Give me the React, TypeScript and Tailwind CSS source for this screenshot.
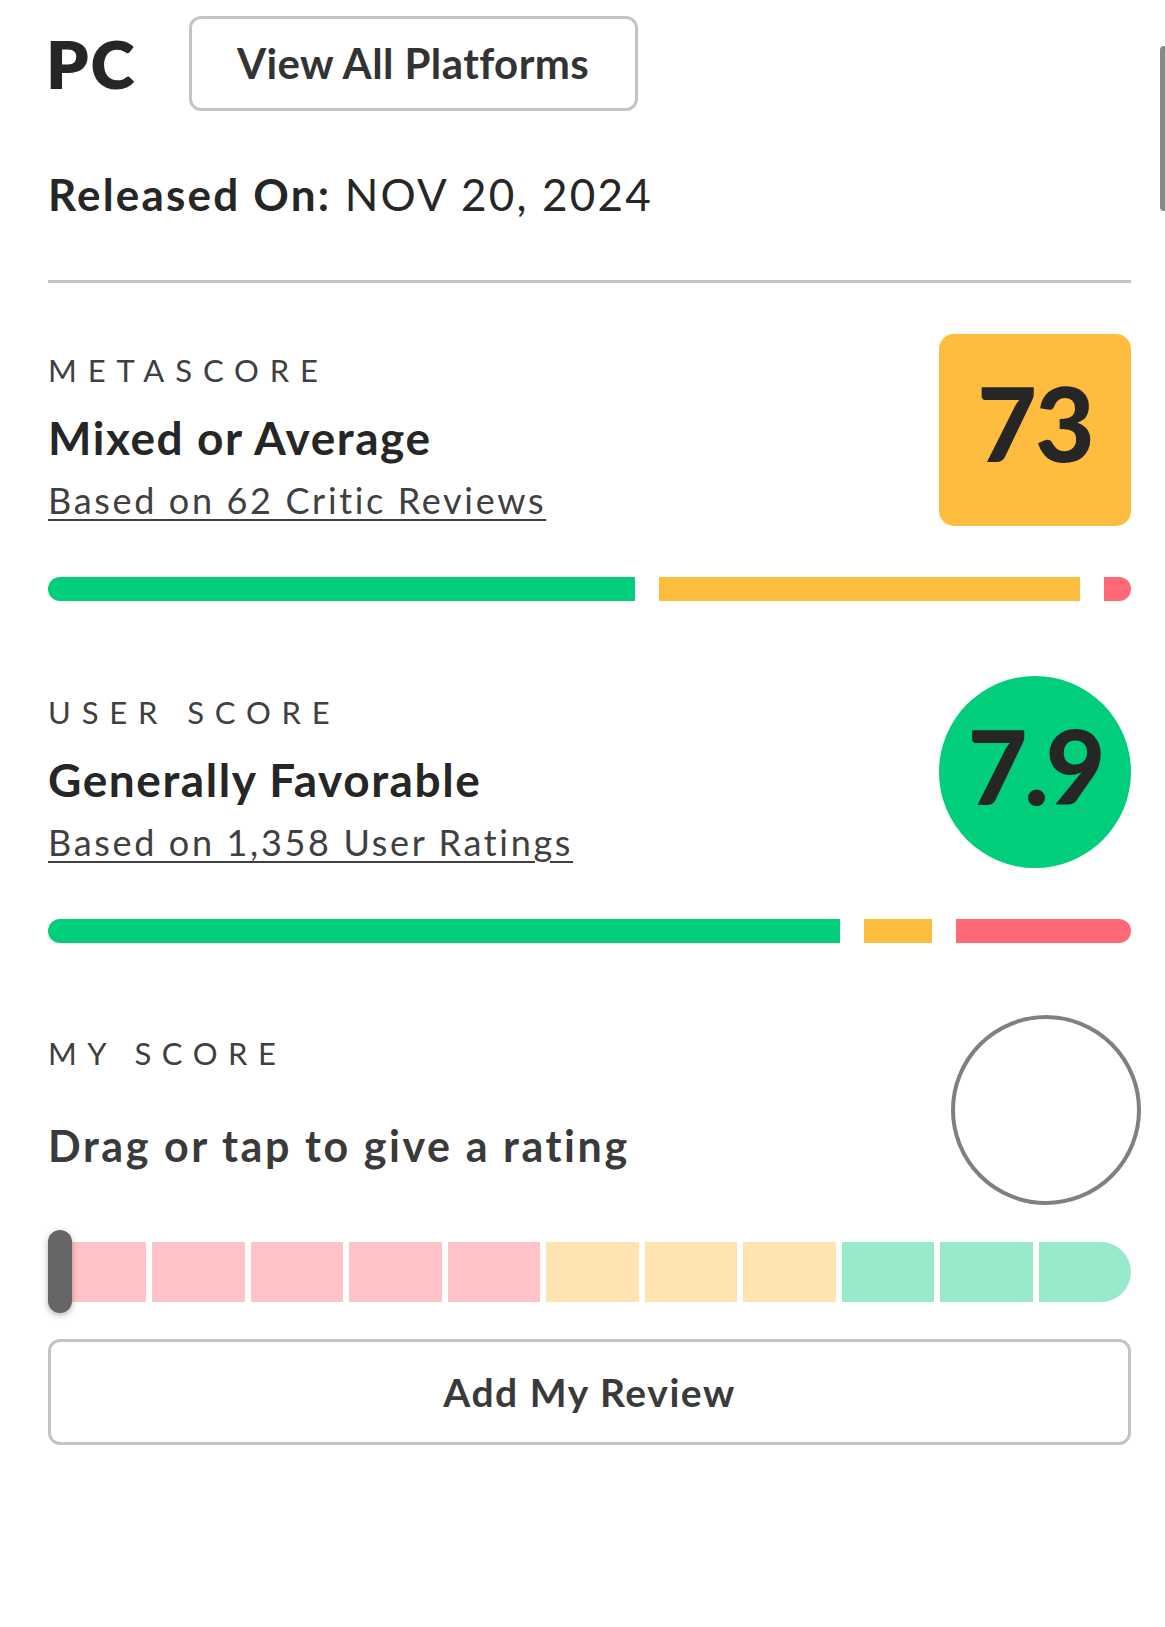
import React from 'react';

const FONT = { fontFamily: 'Lato, "Open Sans", sans-serif' };

function ScoreText({ label, verdict, basis }: { label: string; verdict: string; basis: string }) {
  return (
    <div className="flex flex-col pt-[21px]">
      <p className="text-[31px] leading-none tracking-[0.35em] text-[#404040]">{label}</p>
      <p className="mt-[29px] text-[46px] font-bold leading-none tracking-[0.034em] text-[#262626]">{verdict}</p>
      <a href="#" className="mt-[21px] text-[36px] leading-none tracking-[0.074em] text-[#404040] underline decoration-2 underline-offset-[5px]">
        {basis}
      </a>
    </div>
  );
}

function DistBar({ green, yellow, red }: { green: string; yellow: string; red: string }) {
  return (
    <div className="flex h-[24px] gap-[24px]">
      <div className={`${green} h-full rounded-l-full bg-[#00ce7a]`} />
      <div className={`${yellow} h-full bg-[#ffbd3f]`} />
      <div className={`${red} h-full rounded-r-full bg-[#ff6874]`} />
    </div>
  );
}

const SEGMENTS = [
  'bg-[#ffc3c7]', 'bg-[#ffc3c7]', 'bg-[#ffc3c7]', 'bg-[#ffc3c7]', 'bg-[#ffc3c7]',
  'bg-[#ffe4b2]', 'bg-[#ffe4b2]', 'bg-[#ffe4b2]',
  'bg-[#99eaca]', 'bg-[#99eaca]', 'bg-[#99eaca]',
];

export default function App() {
  return (
    <div className="relative min-h-[1627px] bg-white text-[#262626]" style={FONT}>
      {/* scrollbar thumb */}
      <div className="absolute right-0 top-[46px] h-[165px] w-[5px] rounded-l-sm bg-[#888]" />

      <div className="pl-[48px] pr-[34px]">
        {/* Platform row */}
        <div className="flex items-center gap-[52px] pt-[16px]">
          <h1 className="-ml-[2px] text-[67px] font-extrabold leading-none tracking-[0.03em]">PC</h1>
          <button className="flex h-[95px] w-[449px] items-center justify-center rounded-[12px] border-[3px] border-[#c4c4c4] text-[42px] font-bold tracking-[0.01em] text-[#333]">
            View All Platforms
          </button>
        </div>

        <p className="mt-[61px] text-[44px] leading-none tracking-[0.05em]">
          <span className="font-bold">Released On:</span> NOV 20, 2024
        </p>

        <div className="mt-[64px] h-[3px] bg-[#c4c4c4]" />

        {/* Metascore */}
        <div className="mt-[51px] flex justify-between">
          <ScoreText label="METASCORE" verdict="Mixed or Average" basis="Based on 62 Critic Reviews" />
          <div className="flex h-[192px] w-[192px] items-center justify-center rounded-[15px] bg-[#ffbd3f] pb-[16px] text-[103px] font-black leading-none tracking-[-0.02em] text-[#262626]">
            73
          </div>
        </div>
        <div className="mt-[51px]">
          <DistBar green="w-[587px]" yellow="w-[421px]" red="w-[27px]" />
        </div>

        {/* User score */}
        <div className="mt-[75px] flex justify-between">
          <ScoreText label="USER SCORE" verdict="Generally Favorable" basis="Based on 1,358 User Ratings" />
          <div className="flex h-[192px] w-[192px] items-center justify-center rounded-full bg-[#00ce7a] pb-[14px] text-[103px] font-black leading-none tracking-[-0.03em] text-[#262626]">
            7.9
          </div>
        </div>
        <div className="mt-[51px]">
          <DistBar green="w-[792px]" yellow="w-[68px]" red="w-[175px]" />
        </div>

        {/* My score */}
        <div className="mt-[72px] flex justify-between">
          <div className="flex flex-col pt-[23px]">
            <p className="text-[31px] leading-none tracking-[0.34em] text-[#404040]">MY SCORE</p>
            <p className="mt-[55px] text-[43px] font-bold leading-none tracking-[0.06em] text-[#3a3a3a]">Drag or tap to give a rating</p>
          </div>
          <div className="-mr-[10px] h-[190px] w-[190px] rounded-full border-[4px] border-[#808080]" />
        </div>

        {/* Rating slider */}
        <div className="relative mt-[25px] flex h-[83px] items-center">
          <div className="flex h-[60px] w-full gap-[6px] pl-[6px]">
            {SEGMENTS.map((c, i) => (
              <div key={i} className={`${c} h-full flex-1 ${i === SEGMENTS.length - 1 ? 'rounded-r-[30px]' : ''}`} />
            ))}
          </div>
          <div className="absolute left-0 top-0 h-[83px] w-[24px] rounded-full bg-[#666] shadow-[0_2px_6px_rgba(0,0,0,0.3)]" />
        </div>

        <button className="mt-[26px] flex h-[106px] w-full items-center justify-center rounded-[12px] border-[3px] border-[#c4c4c4] text-[39px] font-bold tracking-[0.04em] text-[#3a3a3a]">
          Add My Review
        </button>
      </div>
    </div>
  );
}
